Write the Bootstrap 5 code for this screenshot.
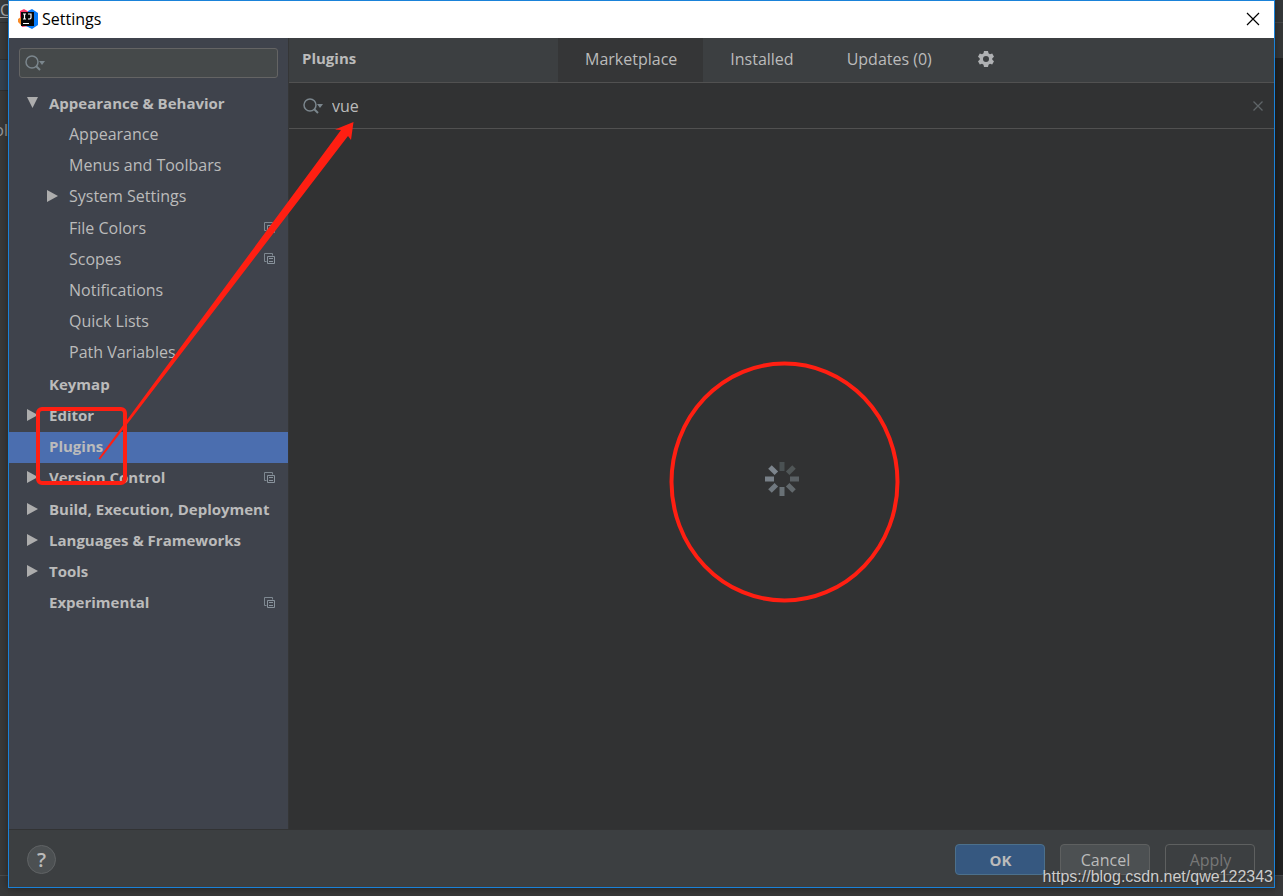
<!DOCTYPE html>
<html lang="en">
<head>
<meta charset="utf-8">
<meta name="viewport" content="width=device-width, initial-scale=1">
<title>Settings</title>
<link href="https://cdn.jsdelivr.net/npm/bootstrap@5.3.0/dist/css/bootstrap.min.css" rel="stylesheet">
<style>
  body { font-family: "Open Sans", "Noto Sans", sans-serif; font-size: 16px; line-height: 24px; color: #bbb; background: #38393a; }
  button, input { font: inherit; }
  .desktop { background: linear-gradient(#3a3c3e, #383838); padding: 0 8px 8px; }
  .edge { top: 0; bottom: 0; width: 8px; overflow: hidden; }
  .edge-left { left: 0; background: linear-gradient(#3a3d3f 0 22px, #2f3031 22px 23px, #393a3b 23px 59px, #2f3031 59px 60px, #34414f 60px 90px, #2f3031 90px 91px, #393939 91px 875px, #4a4c4d 875px 876px, #38393a 876px); }
  .edge-right { right: 0; background: linear-gradient(#343739 0 22px, #454749 22px 23px, #353738 23px 58px, #222 58px 875px, #454749 875px 876px, #38393a 876px); }
  .edge-text { top: 118px; right: 0; color: #999; }
  .edge-top { top: -2px; left: 0; color: #aaa; text-decoration: underline; }
  .settings-window { border: 1px solid #1a82d9; background: #3c3f41; box-shadow: 0 0 8px rgba(0,0,0,.4); z-index: 1; }
  .title-strip { height: 37px; background: #fff; color: #000; padding: 0 14px 2px 9px; }
  .semi { font-weight: 700; font-size: 15px; }
  .plain-btn { border: 0; background: none; padding: 0; color: inherit; line-height: 0; }
  .side { width: 280px; background: #3f434c; border-right: 1px solid #353637; }
  .side-search { margin: 10px 10px 10px; height: 30px; border: 1px solid #646464; border-radius: 3px; background: #45494a; padding: 0 5px; }
  .bare-input { border: 0; outline: 0; background: none; color: #bbb; min-width: 0; padding: 0; }
  .tree { height: 531px; }
  .tree a { color: #bbb; text-decoration: none; flex: 1 1 0; min-height: 0; padding: 0 13px 2px 18px; white-space: nowrap; }
  .tree .sub { padding-left: 38px; }
  .tree .current { background: #4b6eaf; }
  .twist { width: 22px; line-height: 0; flex: none; }
  .top-tabs { height: 45px; border-bottom: 1px solid #515151; }
  .heading { width: 269px; padding: 0 0 4px 13px; line-height: 24px; }
  .top-tabs .tab { border: 0; background: none; color: #bbb; padding: 0 26px 3px 27px; }
  .finder { height: 46px; border-bottom: 1px solid #515151; padding: 0 10px 0 13px; }
  .top-tabs .chosen { background: #353637; }
  .content { background: #313233; }
  .spin { padding-top: 332px; line-height: 0; }
  .foot { height: 58px; border-top: 1px solid #323334; padding: 2px 19px 0 18px; }
  .help { width: 29px; height: 29px; border-radius: 50%; border: 1px solid #606365; background: #4c5052; color: #bbb; font-size: 20px; font-weight: 600; line-height: 26px; padding: 0; }
  .act { width: 90px; height: 31px; border-radius: 4px; border: 1px solid #5e6060; background: #4c5052; color: #bbb; padding: 1px 0 0 1px; line-height: 24px; }
  .act-ok { background: #365880; border-color: #4c708c; font-weight: 700; font-size: 15px; }
  .act-off { background: none; color: #777; }
  .watermark { right: 10px; bottom: 8px; z-index: 3; font: 16px/22px "Liberation Sans", sans-serif; color: #ccc; text-shadow: 1px 1px 1px #333; }
  .marks { left: 0; top: 0; z-index: 2; pointer-events: none; }
</style>
</head>
<body>
<svg width="0" height="0" class="position-absolute" aria-hidden="true">
  <symbol id="right" viewBox="0 0 11 12"><path d="M0 0l11 6-11 6z" fill="#adadad"/></symbol>
  <symbol id="down" viewBox="0 0 12 11"><path d="M0 0h11L5.500 11z" fill="#adadad"/></symbol>
  <symbol id="lens" viewBox="0 0 20 16"><circle cx="7" cy="7" r="6" fill="none" stroke="#7b868d" stroke-width="1.500"/><path d="M11 11l4 4" stroke="#7b868d" stroke-width="2"/><path d="M14 6h6l-3 4z" fill="#7b868d"/></symbol>
  <symbol id="copy" viewBox="0 0 11 11"><path d="M2.500 8.500h-2v-8h8v2" fill="none" stroke="#7e8891"/><path d="M3.500 10.500v-7h7v7zM5 5.500h4M5 8.500h4" fill="none" stroke="#89939c"/></symbol>
</svg>
<div class="desktop position-relative min-vh-100 d-flex">
  <div class="edge edge-left position-absolute" aria-hidden="true"><span class="edge-top position-absolute">C</span><span class="edge-text position-absolute">ol</span></div>
  <div class="edge edge-right position-absolute" aria-hidden="true"></div>
  <main class="settings-window position-relative flex-fill d-flex flex-column">
    <header class="title-strip d-flex align-items-center">
      <svg width="20" height="20" viewBox="0 0 20 20" aria-hidden="true"><path d="M2 2l4-2 5 3 1 14-8 1-2-5z" fill="#fc3a69"/><path d="M0 10l3-2v8l-3-3z" fill="#f98b28"/><path d="M10 2l4-2 6 4v12l-6 4-6-3z" fill="#087cfa"/><path d="M3 3h13v14H3z" fill="#080808"/><path d="M5 5h3M6.500 5v5M5 10h3M10 5h3v4l-1 1h-2M5 14.500h6" fill="none" stroke="#fff" stroke-width="1.200"/></svg>
      <span class="ms-1">Settings</span>
      <button class="plain-btn ms-auto" aria-label="Close"><svg width="14" height="14" viewBox="0 0 14 14"><path d="M1 1l12 12M13 1L1 13" stroke="#000" stroke-width="1.200"/></svg></button>
    </header>
    <div class="d-flex flex-fill">
      <aside class="side flex-shrink-0">
        <label class="side-search d-flex align-items-center"><svg width="20" height="16" aria-hidden="true"><use href="#lens"/></svg><input class="bare-input flex-fill" aria-label="Search settings"></label>
        <nav class="tree d-flex flex-column" aria-label="Settings">
          <a href="#" class="d-flex align-items-center semi"><span class="twist"><svg width="12" height="11"><use href="#down"/></svg></span>Appearance &amp; Behavior</a>
          <a href="#" class="d-flex align-items-center sub"><span class="twist"></span>Appearance</a>
          <a href="#" class="d-flex align-items-center sub"><span class="twist"></span>Menus and Toolbars</a>
          <a href="#" class="d-flex align-items-center sub"><span class="twist"><svg width="11" height="12"><use href="#right"/></svg></span>System Settings</a>
          <a href="#" class="d-flex align-items-center sub"><span class="twist"></span>File Colors<svg class="ms-auto" width="11" height="11"><use href="#copy"/></svg></a>
          <a href="#" class="d-flex align-items-center sub"><span class="twist"></span>Scopes<svg class="ms-auto" width="11" height="11"><use href="#copy"/></svg></a>
          <a href="#" class="d-flex align-items-center sub"><span class="twist"></span>Notifications</a>
          <a href="#" class="d-flex align-items-center sub"><span class="twist"></span>Quick Lists</a>
          <a href="#" class="d-flex align-items-center sub"><span class="twist"></span>Path Variables</a>
          <a href="#" class="d-flex align-items-center semi"><span class="twist"></span>Keymap</a>
          <a href="#" class="d-flex align-items-center semi"><span class="twist"><svg width="11" height="12"><use href="#right"/></svg></span>Editor</a>
          <a href="#" class="d-flex align-items-center semi current" aria-current="page"><span class="twist"></span>Plugins</a>
          <a href="#" class="d-flex align-items-center semi"><span class="twist"><svg width="11" height="12"><use href="#right"/></svg></span>Version Control<svg class="ms-auto" width="11" height="11"><use href="#copy"/></svg></a>
          <a href="#" class="d-flex align-items-center semi"><span class="twist"><svg width="11" height="12"><use href="#right"/></svg></span>Build, Execution, Deployment</a>
          <a href="#" class="d-flex align-items-center semi"><span class="twist"><svg width="11" height="12"><use href="#right"/></svg></span>Languages &amp; Frameworks</a>
          <a href="#" class="d-flex align-items-center semi"><span class="twist"><svg width="11" height="12"><use href="#right"/></svg></span>Tools</a>
          <a href="#" class="d-flex align-items-center semi"><span class="twist"></span>Experimental<svg class="ms-auto" width="11" height="11"><use href="#copy"/></svg></a>
        </nav>
      </aside>
      <section class="flex-fill d-flex flex-column">
        <div class="top-tabs d-flex align-items-stretch">
          <h1 class="heading semi mb-0 d-flex align-items-center">Plugins</h1>
          <button class="tab chosen">Marketplace</button>
          <button class="tab">Installed</button>
          <button class="tab">Updates (0)</button>
          <button class="tab px-3" aria-label="Plugin options"><svg class="d-block ms-1" width="16" height="16" viewBox="0 0 16 16"><path fill="#afb1b3" fill-rule="evenodd" d="M6 0h4l.5 2.300 1.500.9L14.200 2.400l1.800 3.300-1.700 1.500v1.600l1.700 1.500-1.800 3.300-2.200-.8-1.500.9L10 16H6l-.5-2.300L4 12.800l-2.200.8L0 10.300l1.700-1.500V7.200L0 5.700l1.800-3.300 2.200.8 1.500-.9zM8 5a3 3 0 1 0 0 6 3 3 0 0 0 0-6z"/></svg></button>
        </div>
        <div class="content flex-fill">
          <div class="finder d-flex align-items-center"><svg class="me-2" width="22" height="16" viewBox="0 0 20 16" aria-hidden="true"><use href="#lens"/></svg><input class="bare-input flex-fill" value="vue" aria-label="Search plugins"><button class="plain-btn" aria-label="Clear search"><svg width="12" height="12" viewBox="0 0 12 12"><path d="M1.500 1.500l9 9M10.500 1.500l-9 9" stroke="#5f6568" stroke-width="1.300"/></svg></button></div>
          <div class="spin text-center" role="status" aria-label="Loading"><svg width="36" height="36" viewBox="-18 -18 36 36"><g stroke-width="5"><path d="M0-8v-9" stroke="#4a5153"/><path d="M0-8v-9" transform="rotate(45)" stroke="#505657"/><path d="M0-8v-9" transform="rotate(90)" stroke="#5a6064"/><path d="M0-8v-9" transform="rotate(135)" stroke="#62696d"/><path d="M0-8v-9" transform="rotate(180)" stroke="#697176"/><path d="M0-8v-9" transform="rotate(225)" stroke="#70787f"/><path d="M0-8v-9" transform="rotate(270)" stroke="#788088"/><path d="M0-8v-9" transform="rotate(315)" stroke="#7d858d"/></g></svg></div>
        </div>
      </section>
    </div>
    <footer class="foot d-flex align-items-center">
      <button class="help me-auto" aria-label="Help">?</button>
      <div class="d-flex" style="gap:15px"><button class="act act-ok">OK</button><button class="act">Cancel</button><button class="act act-off" disabled>Apply</button></div>
    </footer>
  </main>
  <svg class="marks position-absolute" width="920" height="620" viewBox="0 0 920 620" aria-hidden="true">
    <g fill="none" stroke="#ff1f12" stroke-width="4"><rect x="38" y="409" width="87" height="74" rx="4"/><ellipse cx="784.500" cy="482" rx="113" ry="118.500"/></g>
    <path d="M98.500 458.500L341 130l-6-.5L353.500 122 351 140l-3-4L100 459.500z" fill="#ff1f12"/>
  </svg>
  <div class="watermark position-absolute">https://blog.csdn.net/qwe122343</div>
</div>
<script src="https://cdn.jsdelivr.net/npm/bootstrap@5.3.0/dist/js/bootstrap.bundle.min.js"></script>
</body>
</html>
